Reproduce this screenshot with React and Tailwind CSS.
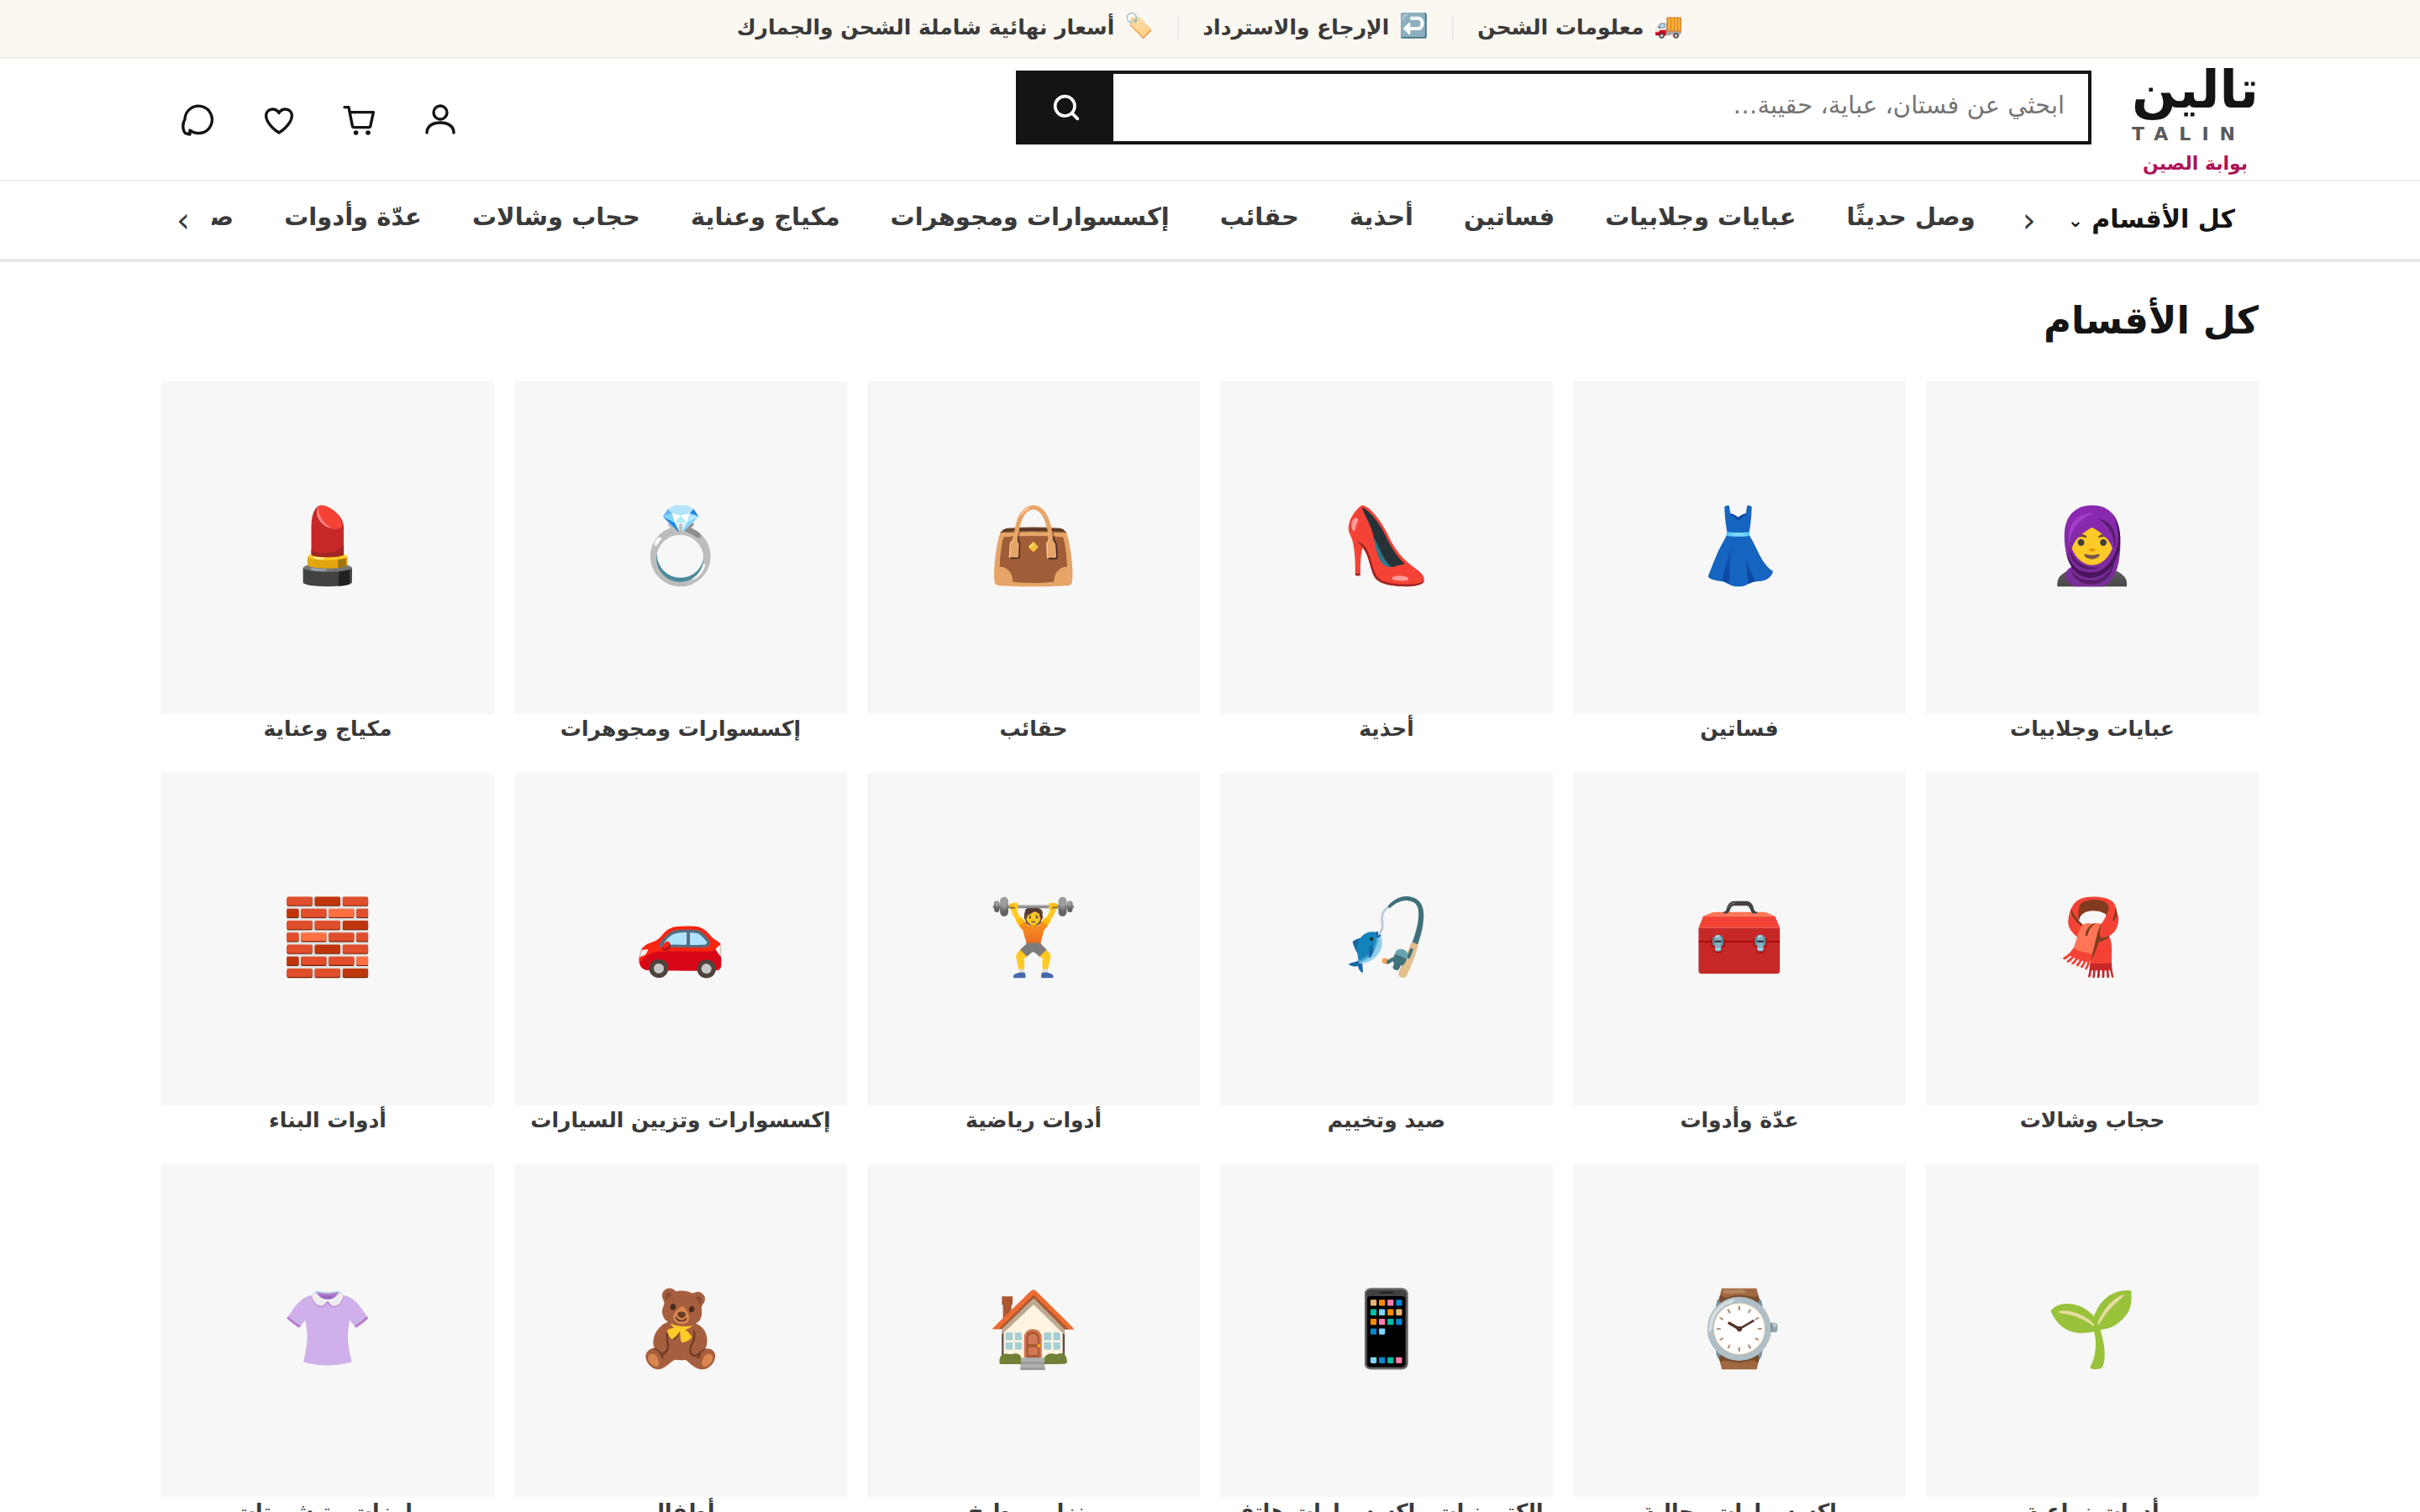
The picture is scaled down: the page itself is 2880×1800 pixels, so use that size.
import { clsx } from "clsx";

const promises = [
  { icon: "🚚", label: "معلومات الشحن" },
  { icon: "↩️", label: "الإرجاع والاسترداد" },
  { icon: "🏷️", label: "أسعار نهائية شاملة الشحن والجمارك" },
];

const navItems = [
  "وصل حديثًا",
  "عبايات وجلابيات",
  "فساتين",
  "أحذية",
  "حقائب",
  "إكسسوارات ومجوهرات",
  "مكياج وعناية",
  "حجاب وشالات",
  "عدّة وأدوات",
  "صيد وتخييم",
];

const categories = [
  { icon: "🧕", label: "عبايات وجلابيات" },
  { icon: "👗", label: "فساتين" },
  { icon: "👠", label: "أحذية" },
  { icon: "👜", label: "حقائب" },
  { icon: "💍", label: "إكسسوارات ومجوهرات" },
  { icon: "💄", label: "مكياج وعناية" },
  { icon: "🧣", label: "حجاب وشالات" },
  { icon: "🧰", label: "عدّة وأدوات" },
  { icon: "🎣", label: "صيد وتخييم" },
  { icon: "🏋️", label: "أدوات رياضية" },
  { icon: "🚗", label: "إكسسوارات وتزيين السيارات" },
  { icon: "🧱", label: "أدوات البناء" },
  { icon: "🌱", label: "أدوات زراعية" },
  { icon: "⌚", label: "إكسسوارات رجالية" },
  { icon: "📱", label: "إلكترونيات وإكسسوارات هاتف" },
  { icon: "🏠", label: "منزل ومطبخ" },
  { icon: "🧸", label: "أطفال" },
  { icon: "👚", label: "بلوزات وتيشيرتات" },
];

const Icon = ({ children }) => (
  <svg
    viewBox="0 0 24 24"
    className="size-12"
    fill="none"
    stroke="currentColor"
    strokeWidth="1.7"
    strokeLinecap="round"
    strokeLinejoin="round"
    aria-hidden="true"
  >
    {children}
  </svg>
);

const actions = [
  {
    label: "حسابي",
    drawing: (
      <>
        <circle cx="12" cy="8" r="4" />
        <path d="M4 20c0-4 3.600-6 8-6s8 2 8 6" />
      </>
    ),
  },
  {
    label: "السلة",
    drawing: (
      <>
        <path d="M3 4.800h2.500l2.200 11.200c.1.500.5.800 1 .8h8.700c.5 0 .9-.3 1-.8l1.800-8.200H6" />
        <circle cx="9.800" cy="20" r="1.400" fill="currentColor" stroke="none" />
        <circle cx="17" cy="20" r="1.400" fill="currentColor" stroke="none" />
      </>
    ),
  },
  {
    label: "المفضلة",
    drawing: (
      <path d="M12 20s-7.700-4.700-7.700-10.200c0-2.200 1.700-3.800 3.800-3.800 1.700 0 3.100.8 3.900 2.200.8-1.400 2.200-2.200 3.900-2.200 2.100 0 3.800 1.600 3.800 3.800C19.700 15.300 12 20 12 20z" />
    ),
  },
  {
    label: "تواصل معنا",
    drawing: (
      <path d="M4 12a8.100 8.100 0 1 1 3 6.500v2.500l-2.700-.7C2.500 18.500 2.500 14.500 4 12z" />
    ),
  },
];

const TopBar = () => (
  <div className="flex h-[70px] items-center justify-center border-b-2 border-[#eeeeee] bg-[#fbf8f1] pb-0.5 text-[25px] font-bold text-[#3a3a3a]">
    {promises.map((item, i) => (
      <a
        key={item.label}
        href="#"
        className={clsx(
          "flex h-7 items-center gap-3 px-7",
          i > 0 && "border-r-2 border-[#e8e8e8]"
        )}
      >
        <span className="pb-1 text-[28px]">{item.icon}</span>
        {item.label}
      </a>
    ))}
  </div>
);

const Header = () => (
  <header className="h-[146px] border-b-2 border-[#eeeeee] px-48">
    <div className="flex h-full items-start gap-12">
      <a href="#" className="flex flex-col items-center">
        <span className="text-[62px] leading-[74px] font-bold">تالين</span>
        <span className="self-end text-[22px] leading-8 font-bold tracking-[13px] text-[#5a5a5a]">
          TALIN
        </span>
        <span className="text-[22px] leading-[38px] font-bold text-[#ad1457]">
          بوابة الصين
        </span>
      </a>
      <form className="mt-[14px] flex h-[88px] w-[1280px] border-4 border-[#141414]">
        <input
          type="search"
          aria-label="بحث"
          placeholder="ابحثي عن فستان، عباية، حقيبة…"
          className="min-w-0 flex-1 px-7 pb-1 text-[29px] outline-none placeholder:text-[#757575]"
        />
        <button
          type="button"
          aria-label="ابحثي"
          className="flex w-28 items-center justify-center bg-[#141414] text-white"
        >
          <svg
            viewBox="0 0 24 24"
            className="size-10"
            fill="none"
            stroke="currentColor"
            strokeWidth="2.200"
            strokeLinecap="round"
            aria-hidden="true"
          >
            <circle cx="11" cy="11" r="7" />
            <path d="M20 20l-4-4" />
          </svg>
        </button>
      </form>
      <div className="mr-auto flex gap-2 self-center">
        {actions.map((action) => (
          <button
            key={action.label}
            type="button"
            aria-label={action.label}
            className="flex size-[88px] items-center justify-center"
          >
            <Icon>{action.drawing}</Icon>
          </button>
        ))}
      </div>
    </div>
  </header>
);

const CategoryNav = () => (
  <nav className="flex h-24 items-center gap-2 border-b-4 border-[#e6e6e6] px-48 text-[29px] font-bold text-[#3a3a3a]">
    <button
      type="button"
      className="flex shrink-0 items-center gap-2.5 pr-7 pb-1 pl-3 text-[30px] text-[#141414]"
    >
      كل الأقسام
      <span className="pt-1 text-[22px]">⌄</span>
    </button>
    <button
      type="button"
      aria-label="السابق"
      className="w-[52px] shrink-0 text-[40px] font-normal"
    >
      ‹
    </button>
    <ul className="flex min-w-0 flex-1 overflow-hidden pb-1.5">
      {navItems.map((item) => (
        <li key={item} className="shrink-0 px-[30px]">
          <a href="#">{item}</a>
        </li>
      ))}
    </ul>
    <button
      type="button"
      aria-label="التالي"
      className="w-[52px] shrink-0 text-[40px] font-normal"
    >
      ›
    </button>
  </nav>
);

const CategoryCard = ({ icon, label }) => (
  <a href="#" className="flex flex-col text-center">
    <span className="flex aspect-square items-center justify-center bg-[#f7f7f7] pb-1 text-[88px]">
      {icon}
    </span>
    <span className="truncate text-[25px] leading-9 font-bold text-[#3a3a3a]">
      {label}
    </span>
  </a>
);

const App = () => {
  return (
    <div
      dir="rtl"
      className="h-screen overflow-hidden bg-white font-['DejaVu_Sans',sans-serif] text-[#141414]"
    >
      <TopBar />
      <Header />
      <CategoryNav />
      <main className="px-48 pt-10">
        <h1 className="text-[45px] leading-[60px] font-bold">كل الأقسام</h1>
        <div className="mt-[42px] grid grid-cols-6 gap-x-6 gap-y-[34px]">
          {categories.map((category) => (
            <CategoryCard key={category.label} {...category} />
          ))}
        </div>
      </main>
    </div>
  );
};
export default App;
